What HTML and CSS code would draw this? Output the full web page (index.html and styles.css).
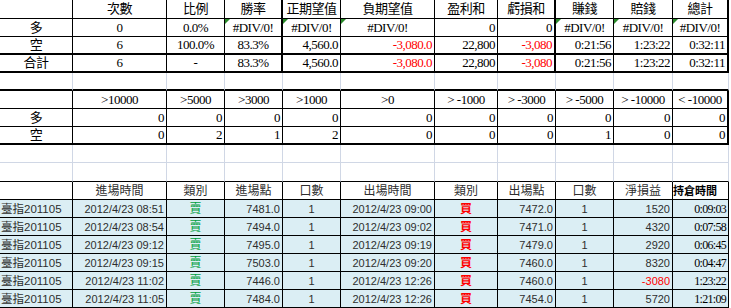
FILE: index.html
```html
<!DOCTYPE html>
<html lang="zh-Hant">
<head>
<meta charset="utf-8">
<title>交易統計</title>
<link rel="stylesheet" href="styles.css">
</head>
<body>
<table class="sheet">
  <colgroup>
    <col class="c-label">
    <col class="c-wide">
    <col class="c-std">
    <col class="c-std">
    <col class="c-std">
    <col class="c-wide">
    <col class="c-mid">
    <col class="c-std">
    <col class="c-std">
    <col class="c-59">
    <col class="c-last">
  </colgroup>
  <tbody>
    <!-- 統計表 -->
    <tr class="sum first">
      <td></td><td class="ctr">次數</td><td class="ctr">比例</td><td class="ctr thick-r">勝率</td><td class="ctr">正期望值</td><td class="ctr">負期望值</td><td class="ctr">盈利和</td><td class="ctr thick-r">虧損和</td><td class="ctr">賺錢</td><td class="ctr">賠錢</td><td class="ctr thick-r">總計</td>
    </tr>
    <tr class="sum">
      <td class="ctr">多</td><td class="ctr">0</td><td class="ctr">0.0%</td><td class="ctr thick-r err">#DIV/0!</td><td class="ctr err">#DIV/0!</td><td class="ctr err">#DIV/0!</td><td class="num">0</td><td class="num thick-r">0</td><td class="ctr err">#DIV/0!</td><td class="ctr err">#DIV/0!</td><td class="ctr thick-r err">#DIV/0!</td>
    </tr>
    <tr class="sum end">
      <td class="ctr">空</td><td class="ctr">6</td><td class="ctr">100.0%</td><td class="ctr thick-r">83.3%</td><td class="num">4,560.0</td><td class="num neg">-3,080.0</td><td class="num">22,800</td><td class="num neg thick-r">-3,080</td><td class="num">0:21:56</td><td class="num">1:23:22</td><td class="num thick-r">0:32:11</td>
    </tr>
    <tr class="sum end">
      <td class="ctr">合計</td><td class="ctr">6</td><td class="ctr">-</td><td class="ctr thick-r">83.3%</td><td class="num">4,560.0</td><td class="num neg">-3,080.0</td><td class="num">22,800</td><td class="num neg thick-r">-3,080</td><td class="num">0:21:56</td><td class="num">1:23:22</td><td class="num thick-r">0:32:11</td>
    </tr>
    <tr class="gap before-range">
      <td></td><td></td><td></td><td></td><td></td><td></td><td></td><td></td><td></td><td></td><td></td>
    </tr>
    <!-- 損益分布 -->
    <tr class="range">
      <td></td><td class="ctr">&gt;10000</td><td class="ctr">&gt;5000</td><td class="ctr">&gt;3000</td><td class="ctr">&gt;1000</td><td class="ctr">&gt;0</td><td class="ctr">&gt; -1000</td><td class="ctr">&gt; -3000</td><td class="ctr">&gt; -5000</td><td class="ctr">&gt; -10000</td><td class="ctr thick-r">&lt; -10000</td>
    </tr>
    <tr class="range">
      <td class="ctr">多</td><td class="num">0</td><td class="num">0</td><td class="num">0</td><td class="num">0</td><td class="num">0</td><td class="num">0</td><td class="num">0</td><td class="num">0</td><td class="num">0</td><td class="num thick-r">0</td>
    </tr>
    <tr class="range end">
      <td class="ctr">空</td><td class="num">0</td><td class="num">2</td><td class="num">1</td><td class="num">2</td><td class="num">0</td><td class="num">0</td><td class="num">0</td><td class="num">1</td><td class="num">0</td><td class="num thick-r">0</td>
    </tr>
    <tr class="gap">
      <td></td><td></td><td></td><td></td><td></td><td></td><td></td><td></td><td></td><td></td><td></td>
    </tr>
    <tr class="gap tall before-trades">
      <td></td><td></td><td></td><td></td><td></td><td></td><td></td><td></td><td></td><td></td><td></td>
    </tr>
    <!-- 交易明細 -->
    <tr class="trades head">
      <td></td><td class="ctr">進場時間</td><td class="ctr">類別</td><td class="ctr">進場點</td><td class="ctr">口數</td><td class="ctr">出場時間</td><td class="ctr">類別</td><td class="ctr">出場點</td><td class="ctr">口數</td><td class="ctr">淨損益</td><td class="hold-head">持倉時間</td>
    </tr>
    <tr class="trades">
      <td class="sym">臺指201105</td><td class="num">2012/4/23 08:51</td><td class="ctr sell">賣</td><td class="num">7481.0</td><td class="ctr">1</td><td class="num">2012/4/23 09:00</td><td class="ctr buy">買</td><td class="num">7472.0</td><td class="ctr">1</td><td class="num">1520</td><td class="num hold">0:09:03</td>
    </tr>
    <tr class="trades">
      <td class="sym">臺指201105</td><td class="num">2012/4/23 08:54</td><td class="ctr sell">賣</td><td class="num">7494.0</td><td class="ctr">1</td><td class="num">2012/4/23 09:02</td><td class="ctr buy">買</td><td class="num">7471.0</td><td class="ctr">1</td><td class="num">4320</td><td class="num hold">0:07:58</td>
    </tr>
    <tr class="trades">
      <td class="sym">臺指201105</td><td class="num">2012/4/23 09:12</td><td class="ctr sell">賣</td><td class="num">7495.0</td><td class="ctr">1</td><td class="num">2012/4/23 09:19</td><td class="ctr buy">買</td><td class="num">7479.0</td><td class="ctr">1</td><td class="num">2920</td><td class="num hold">0:06:45</td>
    </tr>
    <tr class="trades">
      <td class="sym">臺指201105</td><td class="num">2012/4/23 09:15</td><td class="ctr sell">賣</td><td class="num">7503.0</td><td class="ctr">1</td><td class="num">2012/4/23 09:20</td><td class="ctr buy">買</td><td class="num">7460.0</td><td class="ctr">1</td><td class="num">8320</td><td class="num hold">0:04:47</td>
    </tr>
    <tr class="trades">
      <td class="sym">臺指201105</td><td class="num">2012/4/23 11:02</td><td class="ctr sell">賣</td><td class="num">7446.0</td><td class="ctr">1</td><td class="num">2012/4/23 12:26</td><td class="ctr buy">買</td><td class="num">7460.0</td><td class="ctr">1</td><td class="num neg">-3080</td><td class="num hold">1:23:22</td>
    </tr>
    <tr class="trades">
      <td class="sym">臺指201105</td><td class="num">2012/4/23 11:05</td><td class="ctr sell">賣</td><td class="num">7484.0</td><td class="ctr">1</td><td class="num">2012/4/23 12:26</td><td class="ctr buy">買</td><td class="num">7454.0</td><td class="ctr">1</td><td class="num">5720</td><td class="num hold">1:21:09</td>
    </tr>
  </tbody>
</table>
</body>
</html>
```
FILE: styles.css
```css
html, body {
  margin: 0;
  padding: 0;
  background: #ffffff;
  overflow: hidden;
}

.sheet {
  table-layout: fixed;
  border-collapse: separate;
  border-spacing: 0;
  width: 729px;
  font-family: "Liberation Serif", "Noto Sans CJK TC", serif;
  font-size: 13px;
  letter-spacing: -0.5px;
  color: #000;
}

.c-label { width: 73px; }
.c-wide { width: 94px; }
.c-std { width: 58px; }
.c-mid { width: 63px; }
.c-59 { width: 59px; }
.c-last { width: 56px; }

.sheet tr { height: 18px; }
.sheet tr.first,
.sheet tr.tall { height: 19px; }

.sheet td {
  box-sizing: border-box;
  height: 18px;
  padding: 0 2px;
  line-height: 16px;
  white-space: nowrap;
  overflow: hidden;
  vertical-align: middle;
  border-right: 1px solid #d0d7e5;
  border-bottom: 1px solid #d0d7e5;
}
.sheet tr.first td,
.sheet tr.tall td { height: 19px; }

.ctr { text-align: center; }
.num { text-align: right; }
.neg { color: #ff0000; }

/* summary and range tables */
.sum td,
.range td,
.trades td {
  border-right-color: #000;
  border-bottom-color: #000;
}
.sum td.thick-r,
.range td.thick-r { border-right-width: 2px; }
.sum.end td,
.range.end td { border-bottom-width: 2px; }
.before-range td { border-bottom: 2px solid #000; }
.before-trades td { border-bottom-color: #000; }

.err { position: relative; }
.err::before {
  content: "";
  position: absolute;
  top: 0;
  left: 0;
  width: 0;
  height: 0;
  border-top: 5px solid #2a8a2a;
  border-right: 5px solid transparent;
}

/* trade list */
.trades td {
  font-family: "Liberation Sans", "Noto Sans CJK TC", sans-serif;
  font-size: 11px;
  letter-spacing: 0;
  color: #2e2e2e;
  background: #dbeef4;
}
.trades.head td {
  background: #ffffff;
  font-size: 12px;
}
.trades td.sym {
  text-align: left;
  font-size: 11.5px;
  padding-left: 1px;
}
.trades td.sell {
  color: #00a040;
  font-size: 12px;
}
.trades td.buy {
  color: #ff0000;
  font-weight: bold;
  font-size: 12px;
}
.trades td.neg { color: #ff0000; }
.trades td.hold {
  font-family: "Liberation Serif", serif;
  font-size: 12px;
  letter-spacing: -0.7px;
  color: #000;
}
.trades td.hold-head {
  font-size: 11px;
  font-weight: bold;
  color: #000;
  padding: 0;
  text-align: left;
}
```
